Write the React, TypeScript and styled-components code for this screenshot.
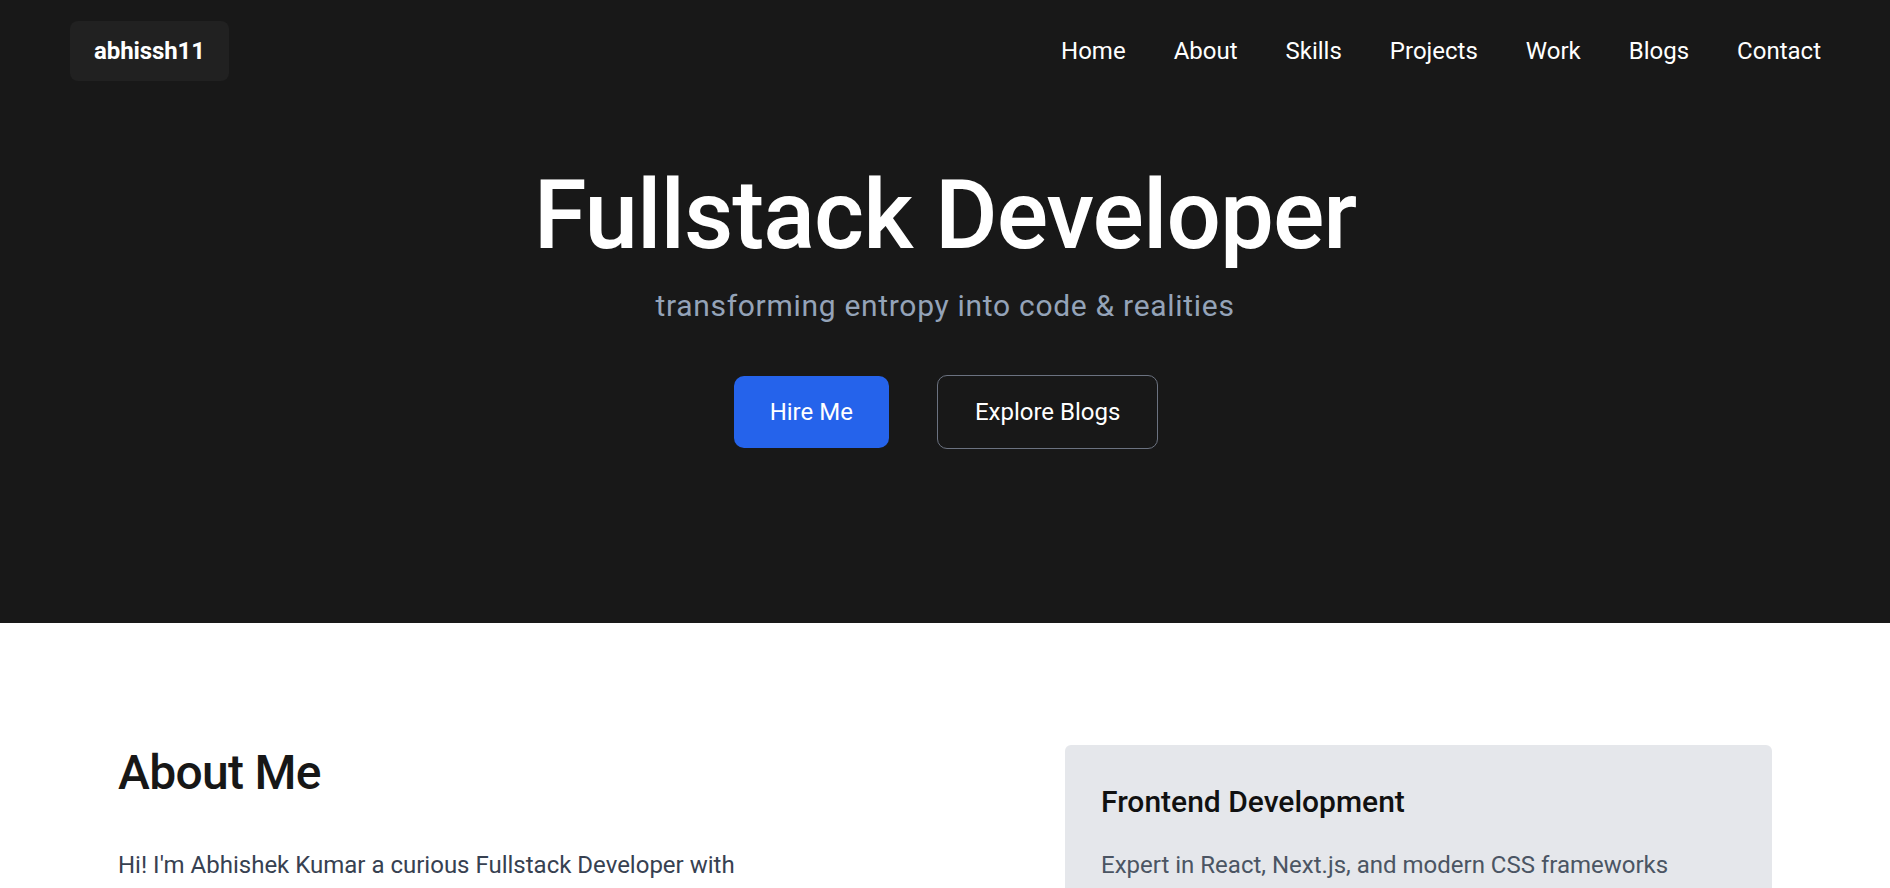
import React from "react";
import styled, { createGlobalStyle } from "styled-components";

const GlobalStyle = createGlobalStyle`
  * { box-sizing: border-box; }
  html, body { margin: 0; padding: 0; }
  body {
    background: #ffffff;
    font-family: Roboto, "Noto Sans", "Liberation Sans", sans-serif;
    -webkit-font-smoothing: antialiased;
  }
`;

const Hero = styled.section`
  background: #181818;
  min-height: 623px;
  display: flex;
  flex-direction: column;
`;

const Header = styled.header`
  display: flex;
  align-items: center;
  justify-content: space-between;
  padding: 21px 69px 21px 70px;
`;

const Logo = styled.a`
  display: block;
  background: #212121;
  color: #ffffff;
  font-size: 24px;
  font-weight: 700;
  line-height: 36px;
  padding: 12px 24px 12px 24px;
  border-radius: 8px;
  text-decoration: none;
  letter-spacing: -0.1px;
`;

const Nav = styled.nav`
  display: flex;
  align-items: center;
  gap: 48px;
`;

const NavLink = styled.a`
  color: #ffffff;
  font-size: 24px;
  line-height: 36px;
  text-decoration: none;
`;

const HeroBody = styled.div`
  display: flex;
  flex-direction: column;
  align-items: center;
  padding-top: 65px;
`;

const Title = styled.h1`
  margin: 0;
  color: #ffffff;
  font-size: 96px;
  font-weight: 500;
  line-height: 1;
  letter-spacing: -1px;
`;

const Subtitle = styled.p`
  margin: 25px 0 0;
  color: #94a3b8;
  font-size: 30px;
  line-height: 36px;
  letter-spacing: 0.7px;
`;

const Actions = styled.div`
  display: flex;
  align-items: center;
  gap: 48px;
  margin-top: 51px;
  padding-left: 2px;
`;

const Button = styled.a<{ $variant: "primary" | "outline" }>`
  display: inline-block;
  font-size: 24px;
  line-height: 36px;
  color: #ffffff;
  text-decoration: none;
  border-radius: 10px;
  padding: ${(p) => (p.$variant === "primary" ? "18px 36px" : "18px 37px")};
  background: ${(p) => (p.$variant === "primary" ? "#2563eb" : "transparent")};
  border: ${(p) => (p.$variant === "primary" ? "none" : "1px solid #6b7280")};
`;

const About = styled.section`
  padding: 122px 118px 0;
`;

const AboutGrid = styled.div`
  display: grid;
  grid-template-columns: 1fr 707px;
  column-gap: 241px;
  align-items: start;
`;

const AboutText = styled.div`
  display: flex;
  flex-direction: column;
`;

const Heading = styled.h2`
  margin: 0;
  color: #171717;
  font-size: 48px;
  font-weight: 500;
  line-height: 1.15;
  letter-spacing: -0.7px;
`;

const Paragraph = styled.p`
  margin: 47px 0 0;
  color: #374151;
  font-size: 24px;
  line-height: 36px;
`;

const Card = styled.div`
  background: #e5e7eb;
  border-radius: 6px;
  padding: 36px;
`;

const CardTitle = styled.h3`
  margin: 0;
  color: #111111;
  font-size: 30px;
  font-weight: 500;
  line-height: 42px;
`;

const CardText = styled.p`
  margin: 24px 0 0;
  color: #4b5563;
  font-size: 24px;
  line-height: 36px;
`;

const navItems = ["Home", "About", "Skills", "Projects", "Work", "Blogs", "Contact"];

export default function App() {
  return (
    <>
      <GlobalStyle />
      <Hero>
        <Header>
          <Logo href="#">abhissh11</Logo>
          <Nav>
            {navItems.map((n) => (
              <NavLink key={n} href="#">
                {n}
              </NavLink>
            ))}
          </Nav>
        </Header>
        <HeroBody>
          <Title>Fullstack Developer</Title>
          <Subtitle>transforming entropy into code &amp; realities</Subtitle>
          <Actions>
            <Button $variant="primary" href="#">Hire Me</Button>
            <Button $variant="outline" href="#">Explore Blogs</Button>
          </Actions>
        </HeroBody>
      </Hero>
      <About>
        <AboutGrid>
          <AboutText>
            <Heading>About Me</Heading>
            <Paragraph>
              Hi! I'm Abhishek Kumar a curious Fullstack Developer with expertise in building
              modern, scalable web applications and turning ideas into reality.
            </Paragraph>
          </AboutText>
          <Card>
            <CardTitle>Frontend Development</CardTitle>
            <CardText>Expert in React, Next.js, and modern CSS frameworks</CardText>
          </Card>
        </AboutGrid>
      </About>
    </>
  );
}
